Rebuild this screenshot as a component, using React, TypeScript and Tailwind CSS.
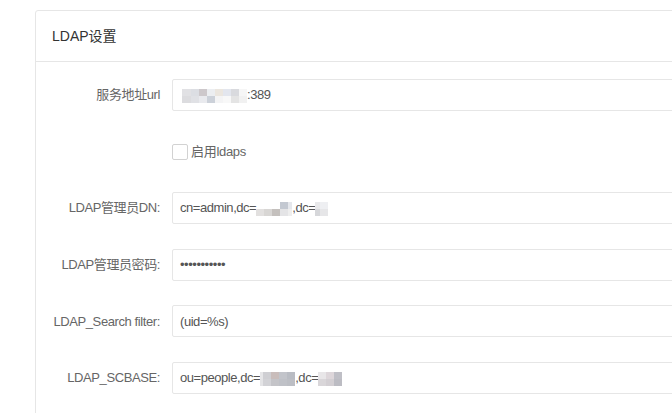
import React from "react";

// ── LDAP settings form ───────────────────────────────────────

type Block = { w: number; top?: string; bottom: string };

const FONT = { fontFamily: "'Liberation Sans', 'Noto Sans CJK SC', sans-serif" };

// mosaic blur used to hide the host / dc values
function Mosaic({ blocks }: { blocks: Block[] }) {
  return (
    <span className="inline-flex items-end h-[16px] align-middle">
      {blocks.map((b, i) => (
        <span key={i} className="flex flex-col" style={{ width: b.w }}>
          <span className="h-[7px]" style={{ backgroundColor: b.top ?? "transparent" }} />
          <span className="h-[7px]" style={{ backgroundColor: b.bottom }} />
        </span>
      ))}
    </span>
  );
}

function Row({ label, children }: { label: string; children: React.ReactNode }) {
  return (
    <div className="flex items-center h-[32px]">
      <label className="w-[136px] shrink-0 pr-[12px] text-right text-[13px] tracking-[-0.4px] text-[#666]">{label}</label>
      <div className="flex-1 h-[32px] flex items-center border border-[#e6e6e6] rounded-[2px] pl-[7px] text-[13px] tracking-[-0.45px] text-[#555] whitespace-nowrap">
        {children}
      </div>
    </div>
  );
}

export default function App() {
  return (
    <div className="w-[672px] h-[413px] overflow-hidden bg-white" style={FONT}>
      <div className="ml-[35px] mt-[10px] w-[700px] h-[420px] border border-[#e6e6e6] rounded-[3px] bg-white">
        <div className="h-[51px] flex items-center pl-[16px] border-b border-[#e6e6e6] text-[14px] text-[#333]">
          LDAP设置
        </div>

        <div className="pt-[17px] flex flex-col gap-[24.6px]">
          <Row label="服务地址url">
            <span className="w-[2px]" />
            <Mosaic
              blocks={[
                { w: 9, top: "#e1e1e4", bottom: "#dcdcdf" },
                { w: 8, top: "#dcdee3", bottom: "#e0e1e5" },
                { w: 8, top: "#cdc8cb", bottom: "#e9eaee" },
                { w: 8, top: "#eceef1", bottom: "#ccd1d9" },
                { w: 8, top: "#ebe6df", bottom: "#f4f4f5" },
                { w: 8, top: "#e3e6ee", bottom: "#f8f8f8" },
                { w: 8, top: "#d9dade", bottom: "#e4e4e4" },
                { w: 8, top: "#f6f6f6", bottom: "#f1f1f1" },
              ]}
            />
            <span>:389</span>
          </Row>

          <div className="flex items-center h-[32px]">
            <div className="w-[136px] shrink-0" />
            <span className="w-[16px] h-[16px] border border-[#d2d2d2] rounded-[2px] bg-white" />
            <span className="ml-[3px] text-[13px] tracking-[-0.3px] text-[#666]">启用ldaps</span>
          </div>

          <Row label="LDAP管理员DN:">
            <span>cn=admin,dc=</span>
            <Mosaic
              blocks={[
                { w: 8, bottom: "#e2e0df" },
                { w: 8, bottom: "#d8d6d4" },
                { w: 8, bottom: "#c4c0bd" },
                { w: 8, top: "#c3c8d1", bottom: "#e4e4e6" },
                { w: 4, top: "#e5e7ec", bottom: "#eeeeee" },
              ]}
            />
            <span>,dc=</span>
            <Mosaic
              blocks={[
                { w: 5, top: "#e8e8ea", bottom: "#d6d7da" },
                { w: 8, top: "#eeeff2", bottom: "#e6e6e8" },
              ]}
            />
          </Row>

          <Row label="LDAP管理员密码:">
            <span className="text-[#555]">•••••••••••</span>
          </Row>

          <Row label="LDAP_Search filter:">
            <span>(uid=%s)</span>
          </Row>

          <Row label="LDAP_SCBASE:">
            <span>ou=people,dc=</span>
            <Mosaic
              blocks={[
                { w: 3, top: "#e6e6e8", bottom: "#e4e4e6" },
                { w: 8, top: "#cfcfd3", bottom: "#d2d2d6" },
                { w: 8, top: "#c9bdbb", bottom: "#c4c4c8" },
                { w: 8, top: "#c2c4ca", bottom: "#bfc1c7" },
                { w: 8, top: "#b9bcc3", bottom: "#bcbec4" },
              ]}
            />
            <span>,dc=</span>
            <Mosaic
              blocks={[
                { w: 8, top: "#e8e6e8", bottom: "#d9d6d9" },
                { w: 8, top: "#ddd6da", bottom: "#d3cfd3" },
                { w: 8, top: "#bfbfc6", bottom: "#bcbcc3" },
              ]}
            />
          </Row>
        </div>
      </div>
    </div>
  );
}
